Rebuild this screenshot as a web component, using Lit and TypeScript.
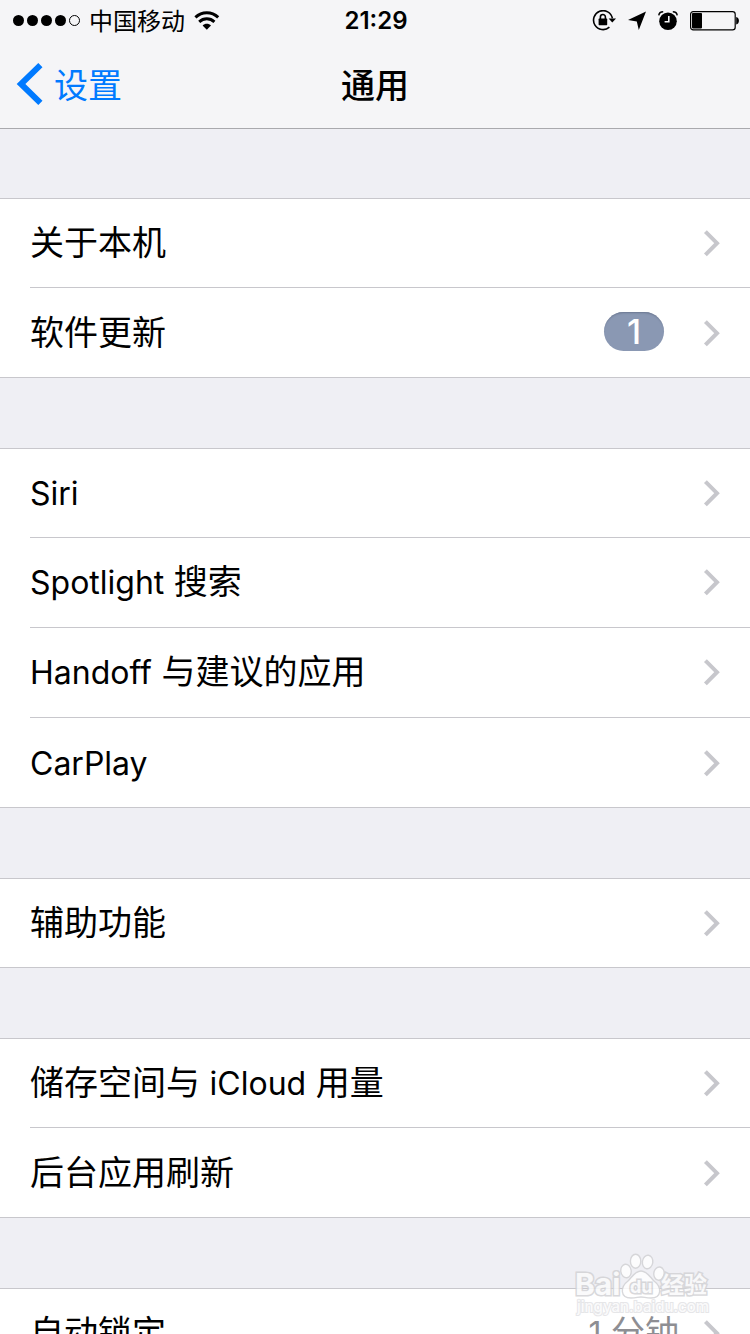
import { LitElement, html, svg, css, nothing } from "lit";
import { customElement, property } from "lit/decorators.js";

interface Item {
  label: string;
  badge?: string;
  value?: string;
}

const GROUPS: Item[][] = [
  [{ label: "关于本机" }, { label: "软件更新", badge: "1" }],
  [
    { label: "Siri" },
    { label: "Spotlight 搜索" },
    { label: "Handoff 与建议的应用" },
    { label: "CarPlay" },
  ],
  [{ label: "辅助功能" }],
  [{ label: "储存空间与 iCloud 用量" }, { label: "后台应用刷新" }],
  [{ label: "自动锁定", value: "1 分钟" }],
];

/** Wraps the Latin words of a mixed label, which are set slightly smaller. */
const mixed = (text: string) =>
  text
    .split(/([\x21-\x7e]+)/)
    .filter(Boolean)
    .map((run) => (/^[\x21-\x7e]/.test(run) ? html`<span class="latin">${run}</span>` : run));

@customElement("status-bar")
export class StatusBar extends LitElement {
  static styles = css`
    :host {
      display: grid;
      grid-template-columns: 1fr auto 1fr;
      align-items: center;
      height: 38px;
      padding: 2px 11px 0 13px;
      font-size: 24px;
      line-height: 36px;
    }
    svg {
      display: block;
    }
    .left,
    .right {
      display: flex;
      align-items: center;
    }
    .left {
      gap: 9px;
    }
    .carrier {
      padding-top: 2px;
    }
    .right {
      justify-content: flex-end;
      gap: 12px;
    }
    .time {
      font-weight: 600;
    }
  `;

  render() {
    return html`
      <div class="left">
        <svg width="67" height="12" viewBox="0 0 67 12" aria-hidden="true">
          ${[0, 1, 2, 3].map((i) => svg`<circle cx=${5.5 + i * 14} cy="5.5" r="5.5" />`)}
          <circle cx="61.5" cy="5.5" r="5" fill="none" stroke="#000" />
        </svg>
        <span class="carrier">中国移动</span>
        <svg width="26" height="20" viewBox="0 0 26 20" aria-hidden="true">
          <g fill="none" stroke="#000" stroke-width="3">
            <path d="M1.4 6.4C8 .2 17.6 .2 24.2 6.4" />
            <path d="M5.2 10.8C9.6 6.8 16 6.8 20.4 10.8" />
          </g>
          <path d="M12.8 18.8L8.6 14.6C10.8 12.2 14.8 12.2 17 14.6Z" />
        </svg>
      </div>
      <span class="time">21:29</span>
      <div class="right">
        <svg width="24" height="22" viewBox="0 0 24 22" aria-hidden="true">
          <path d="M20.4 8.4A9.5 9.5 0 1 0 17.4 17.2" fill="none" stroke="#000" stroke-width="1.6" />
          <path d="M16.6 8.4H24L20.3 12.6Z" />
          <rect x="6.6" y="8.6" width="8.6" height="6.6" rx=".6" />
          <path d="M8.4 9.2V7a2.5 2.5 0 0 1 5 0V9.2" fill="none" stroke="#000" stroke-width="1.6" />
        </svg>
        <svg width="18" height="20" viewBox="0 0 18 20" aria-hidden="true">
          <path d="M18 .6L0 9L8.8 10.6L10.8 19Z" />
        </svg>
        <svg width="20" height="20" viewBox="0 0 20 20" aria-hidden="true">
          <circle cx="10" cy="10.2" r="8.8" />
          <path d="M10.8 5V10.8H6.6" fill="none" stroke="#f5f5f7" stroke-width="1.6" />
          <path
            d="M.8 4.4C1 2.2 2.8 .8 5.2 .8M19.2 4.4C19 2.2 17.2 .8 14.8 .8"
            fill="none"
            stroke="#000"
            stroke-width="1.5"
          />
        </svg>
        <svg width="49" height="20" viewBox="0 0 49 20" aria-hidden="true">
          <rect x=".6" y=".6" width="44.6" height="18.2" rx="2.6" fill="none" stroke="#000" stroke-width="1.2" />
          <rect x="2" y="2" width="10" height="15.4" rx=".8" />
          <path d="M46.2 6C49.8 6.6 49.8 13 46.2 13.6Z" />
        </svg>
      </div>
    `;
  }
}

@customElement("settings-row")
export class SettingsRow extends LitElement {
  @property({ attribute: false }) item!: Item;

  static styles = css`
    :host {
      display: block;
    }
    .row {
      display: flex;
      align-items: center;
      height: 88px;
      padding-right: 29px;
      color: #000;
      text-decoration: none;
    }
    .label {
      flex: 1;
    }
    .latin {
      font-size: 32px;
    }
    .value {
      margin-right: 24px;
      color: #8e8e93;
    }
    .badge {
      min-width: 60px;
      box-sizing: border-box;
      margin-right: 39px;
      margin-bottom: 4px;
      border-radius: 20px;
      background: #8a98b3;
      box-shadow: inset 0 2px 2px -1px #6b7790;
      color: #fff;
      font-size: 34px;
      font-weight: 500;
      line-height: 39px;
      text-align: center;
    }
    .chevron {
      display: block;
      fill: none;
      stroke: #c7c7cc;
      stroke-width: 4;
    }
  `;

  render() {
    const { label, badge, value } = this.item;
    return html`
      <a class="row" href="#">
        <span class="label">${mixed(label)}</span>
        ${badge ? html`<span class="badge">${badge}</span>` : nothing}
        ${value ? html`<span class="value">${mixed(value)}</span>` : nothing}
        <svg class="chevron" width="18" height="28" viewBox="0 0 18 28" aria-hidden="true">
          <path d="M2.4 2.6L14 14.2L2.4 25.8" />
        </svg>
      </a>
    `;
  }
}

@customElement("baidu-mark")
export class BaiduMark extends LitElement {
  static styles = css`
    :host {
      display: block;
      width: 136px;
      pointer-events: none;
      opacity: 0.85;
    }
    svg {
      display: block;
    }
    .word {
      fill: #fafafb;
      stroke: #d2d2d5;
      stroke-width: 3px;
      paint-order: stroke;
      font-family: Inter, "Noto Sans CJK SC", sans-serif;
      font-weight: 700;
    }
    .url {
      stroke: #e2e2e5;
      stroke-width: 2px;
      font-weight: 500;
    }
    .paw {
      fill: #fff;
      stroke: #d2d2d5;
      stroke-width: 1.4;
    }
  `;

  render() {
    return html`
      <svg width="136" height="66" viewBox="0 0 136 66" role="img" aria-label="Baidu 经验">
        <g class="paw">
          <ellipse cx="52" cy="20" rx="5.2" ry="6.8" transform="rotate(-8 52 20)" />
          <ellipse cx="61.6" cy="10.2" rx="5.2" ry="7" />
          <ellipse cx="73.6" cy="11" rx="5.2" ry="6.8" transform="rotate(8 73.6 11)" />
          <ellipse cx="85" cy="22.6" rx="5.2" ry="6.6" transform="rotate(8 85 22.6)" />
          <path
            d="M67 20C73 20 76 26 80 30C88 36 88 47 77 47C72 47 70 46 67 46S62 47 57 47C46 47 46 36 54 30C58 26 61 20 67 20Z"
          />
        </g>
        <text class="word" x="1" y="44" font-size="30">Bai</text>
        <text class="word" x="56" y="42" font-size="18">du</text>
        <text class="word" x="87" y="42" font-size="23">经验</text>
        <text class="word url" x="3" y="61" font-size="15">jingyan.baidu.com</text>
      </svg>
    `;
  }
}

@customElement("app-root")
export class AppRoot extends LitElement {
  static styles = css`
    :host {
      position: relative;
      display: flex;
      flex-direction: column;
      height: 100vh;
      overflow: hidden;
      background: #efeff4;
      color: #000;
      font-family: Inter, "Noto Sans CJK SC", sans-serif;
      font-size: 34px;
      line-height: 48px;
    }
    .header {
      flex: none;
      border-bottom: 1px solid #a9a9ad;
      background: #f5f5f7;
    }
    .nav {
      display: grid;
      grid-template-columns: 1fr auto 1fr;
      align-items: center;
      height: 88px;
      padding: 0 16px;
    }
    .back {
      display: flex;
      align-items: center;
      justify-self: start;
      gap: 11px;
      color: #007aff;
      text-decoration: none;
    }
    .back-label,
    .title {
      padding-top: 3px;
    }
    .back-icon {
      display: block;
      fill: none;
      stroke: currentColor;
      stroke-width: 6;
    }
    .title {
      margin: 0;
      font-size: 34px;
      font-weight: 500;
    }
    .content {
      flex: 1;
      display: flex;
      flex-direction: column;
      gap: 70px;
      min-height: 0;
      padding-top: 69px;
      overflow: hidden;
    }
    .group {
      flex: none;
      margin: 0;
      padding: 0 0 0 30px;
      border: solid #c8c7cc;
      border-width: 1px 0;
      background: #fff;
      list-style: none;
    }
    .item + .item {
      padding-bottom: 1px;
      border-top: 1px solid #c8c7cc;
    }
    .item + .item:last-child {
      padding-top: 1px;
      padding-bottom: 0;
    }
    .mark {
      position: absolute;
      right: 40px;
      bottom: 17px;
    }
  `;

  render() {
    return html`
      <header class="header">
        <status-bar></status-bar>
        <nav class="nav">
          <a class="back" href="#">
            <svg class="back-icon" width="27" height="42" viewBox="0 0 27 42" aria-hidden="true">
              <path d="M24.4 2.2L5 21L24.4 39.8" />
            </svg>
            <span class="back-label">设置</span>
          </a>
          <h1 class="title">通用</h1>
        </nav>
      </header>
      <main class="content">
        ${GROUPS.map(
          (group) => html`
            <ul class="group">
              ${group.map(
                (item) => html`<li class="item"><settings-row .item=${item}></settings-row></li>`
              )}
            </ul>
          `
        )}
      </main>
      <baidu-mark class="mark"></baidu-mark>
    `;
  }
}
